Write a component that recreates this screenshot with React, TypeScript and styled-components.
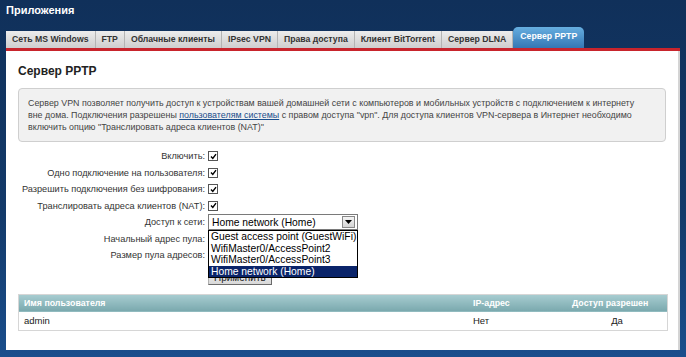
import React from 'react'
import styled, { createGlobalStyle } from 'styled-components';

const GlobalStyle = createGlobalStyle`
    html, body { margin: 0; padding: 0; }
    body {
        font-family: "Liberation Sans", Arial, sans-serif;
        background: #10305a;
    }
`;

const tabs = ["Сеть MS Windows", "FTP", "Облачные клиенты", "IPsec VPN", "Права доступа", "Клиент BitTorrent", "Сервер DLNA", "Сервер PPTP"];

const checks = [
    "Включить:",
    "Одно подключение на пользователя:",
    "Разрешить подключения без шифрования:",
    "Транслировать адреса клиентов (NAT):",
];

const networks = ["Guest access point (GuestWiFi)", "WifiMaster0/AccessPoint2", "WifiMaster0/AccessPoint3", "Home network (Home)"];

const App = () => {
    return (
        <>
            <GlobalStyle />
            <Page>
                <Header>Приложения</Header>
                <TabBar>
                    {tabs.map((t, i) => (
                        <Tab key={t} $active={i === tabs.length - 1}>{t}</Tab>
                    ))}
                </TabBar>
                <Panel>
                    <Title>Сервер PPTP</Title>
                    <InfoBox>
                        Сервер VPN позволяет получить доступ к устройствам вашей домашней сети с компьютеров и мобильных устройств с подключением к интернету вне дома. Подключения разрешены <a href="#">пользователям системы</a> с правом доступа "vpn". Для доступа клиентов VPN-сервера в Интернет необходимо включить опцию "Транслировать адреса клиентов (NAT)"
                    </InfoBox>
                    <Form>
                        {checks.map(c => (
                            <Row key={c}>
                                <Label>{c}</Label>
                                <Check><Tick viewBox="0 0 7 7"><path d="M1 3.5 L2.8 5.4 L6 1.2" /></Tick></Check>
                            </Row>
                        ))}
                        <Row>
                            <Label>Доступ к сети:</Label>
                            <SelectWrap>
                                <FakeSelect>
                                    <span>Home network (Home)</span>
                                    <SelectArrow><svg width="7" height="4" viewBox="0 0 7 4"><path d="M0 0 H7 L3.5 4 Z" fill="#000" /></svg></SelectArrow>
                                </FakeSelect>
                                <DropList>
                                    {networks.map((n, i) => (
                                        <DropItem key={n} $selected={i === networks.length - 1}>{n}</DropItem>
                                    ))}
                                </DropList>
                            </SelectWrap>
                        </Row>
                        <Row>
                            <Label>Начальный адрес пула:</Label>
                            <TextField />
                        </Row>
                        <Row>
                            <Label>Размер пула адресов:</Label>
                            <TextField />
                        </Row>
                        <ButtonRow>
                            <ApplyButton>Применить</ApplyButton>
                        </ButtonRow>
                    </Form>
                    <Table>
                        <thead>
                            <tr>
                                <Th>Имя пользователя</Th>
                                <Th $w={89}>IP-адрес</Th>
                                <Th $w={90}>Доступ разрешен</Th>
                            </tr>
                        </thead>
                        <tbody>
                            <tr>
                                <Td>admin</Td>
                                <Td>Нет</Td>
                                <Td $center>Да</Td>
                            </tr>
                        </tbody>
                    </Table>
                </Panel>
            </Page>
        </>
    )
};

const Page = styled.div`
    width: 686px;
    height: 357px;
    box-sizing: border-box;
    padding: 0 6px;
    background: linear-gradient(to bottom, #10305a 0%, #133a6a 60%, #1a4e8c 100%);
    overflow: hidden;
`;

const Header = styled.div`
    height: 27px;
    line-height: 21px;
    color: #ffffff;
    font-weight: bold;
    font-size: 11px;
    font-family: "Liberation Sans", Arial, sans-serif;
`;

const TabBar = styled.div`
    display: flex;
    align-items: flex-end;
    height: 21px;
    border-bottom: 3px solid #c8242c;
`;

const Tab = styled.div<{ $active?: boolean }>`
    height: ${p => p.$active ? 21 : 17}px;
    line-height: ${p => p.$active ? 19 : 17}px;
    padding: 0 ${p => p.$active ? 7 : 6}px;
    font-family: "Liberation Sans", Arial, sans-serif;
    font-size: 8.7px;
    font-weight: bold;
    white-space: nowrap;
    color: ${p => p.$active ? '#ffffff' : '#333333'};
    background: ${p => p.$active
        ? 'linear-gradient(to bottom, #66aee0, #3477b4)'
        : 'linear-gradient(to bottom, #ececec, #cfcfcf)'};
    border-right: ${p => p.$active ? 'none' : '1px solid #b4b4b4'};
    border-radius: ${p => p.$active ? '5px 5px 0 0' : '0'};
`;

const Panel = styled.div`
    position: relative;
    background: #ffffff;
    width: 674px;
    height: 299px;
    box-sizing: border-box;
    padding: 13px 12px 0 12px;
    border-right: 2px solid #d4d4d4;
`;

const Title = styled.div`
    font-size: 12px;
    font-weight: bold;
    color: #222;
    font-family: "Liberation Sans", Arial, sans-serif;
    height: 24px;
`;

const InfoBox = styled.div`
    background: #f1f1f1;
    border: 1px solid #cfcfcf;
    border-radius: 4px;
    padding: 8px 22px 8px 9px;
    font-family: "Liberation Sans", Arial, sans-serif;
    font-size: 8.9px;
    line-height: 12px;
    color: #444;
    height: 36px;
    a { color: #1a4e8c; }
`;

const Form = styled.div`
    display: flex;
    flex-direction: column;
    margin-top: 6px;
`;

const Row = styled.div`
    display: flex;
    align-items: center;
    height: 16.5px;
`;

const Label = styled.div`
    width: 187px;
    text-align: right;
    padding-right: 3px;
    font-family: "Liberation Sans", Arial, sans-serif;
    font-size: 9.2px;
    color: #333;
    white-space: nowrap;
`;

const Check = styled.div`
    width: 8px;
    height: 8px;
    border: 1px solid #555;
    background: #fff;
    display: flex;
    align-items: center;
    justify-content: center;
`;

const Tick = styled.svg`
    width: 7px;
    height: 7px;
    path { fill: none; stroke: #000; stroke-width: 1.4; }
`;

const SelectWrap = styled.div`
    position: relative;
`;

const FakeSelect = styled.div`
    width: 148px;
    height: 14px;
    border: 1px solid #7a7a7a;
    box-sizing: content-box;
    background: #fff;
    display: flex;
    align-items: center;
    font-family: "Liberation Sans", Arial, sans-serif;
    font-size: 10.3px;
    color: #000;
    span { flex: 1; padding-left: 3px; }
`;

const SelectArrow = styled.div`
    width: 11px;
    height: 10px;
    margin-right: 2px;
    border: 1px solid #888;
    background: linear-gradient(to bottom, #f4f4f4, #d4d4d4);
    display: flex;
    align-items: center;
    justify-content: center;
`;

const DropList = styled.div`
    position: absolute;
    top: 16px;
    left: 0;
    width: 148px;
    border: 1px solid #000;
    background: #fff;
    z-index: 2;
`;

const DropItem = styled.div<{ $selected?: boolean }>`
    height: 11.5px;
    line-height: 11.5px;
    padding-left: 2px;
    font-family: "Liberation Sans", Arial, sans-serif;
    font-size: 10.3px;
    white-space: nowrap;
    color: ${p => p.$selected ? '#ffffff' : '#000000'};
    background: ${p => p.$selected ? '#0a246a' : '#ffffff'};
`;

const TextField = styled.div`
    width: 100px;
    height: 12px;
    border: 1px solid #7a7a7a;
    background: #fff;
`;

const ButtonRow = styled.div`
    padding-left: 190px;
    margin-top: 3px;
`;

const ApplyButton = styled.div`
    display: inline-block;
    height: 13px;
    line-height: 13px;
    padding: 0 5px;
    font-family: "Liberation Sans", Arial, sans-serif;
    font-size: 10px;
    color: #222;
    background: linear-gradient(to bottom, #f0f0f0, #d8d8d8);
    border: 1px solid #6a6a6a;
    border-top-color: #b0b0b0;
    border-left-color: #b0b0b0;
`;

const Table = styled.table`
    width: 650px;
    margin-top: 9px;
    border-collapse: collapse;
    border: 1px solid #d6d6d6;
    font-family: "Liberation Sans", Arial, sans-serif;
    font-size: 8.8px;
`;

const Th = styled.th<{ $w?: number }>`
    height: 17px;
    padding: 0 5px;
    text-align: left;
    width: ${p => p.$w ? p.$w + 'px' : 'auto'};
    color: #ffffff;
    font-weight: bold;
    background: linear-gradient(to bottom, #a8cdd1, #79a8ad);
    white-space: nowrap;
`;

const Td = styled.td<{ $center?: boolean }>`
    height: 18px;
    padding: 0 5px;
    font-size: 9.5px;
    text-align: ${p => p.$center ? 'center' : 'left'};
    color: #222;
`;

export default App
